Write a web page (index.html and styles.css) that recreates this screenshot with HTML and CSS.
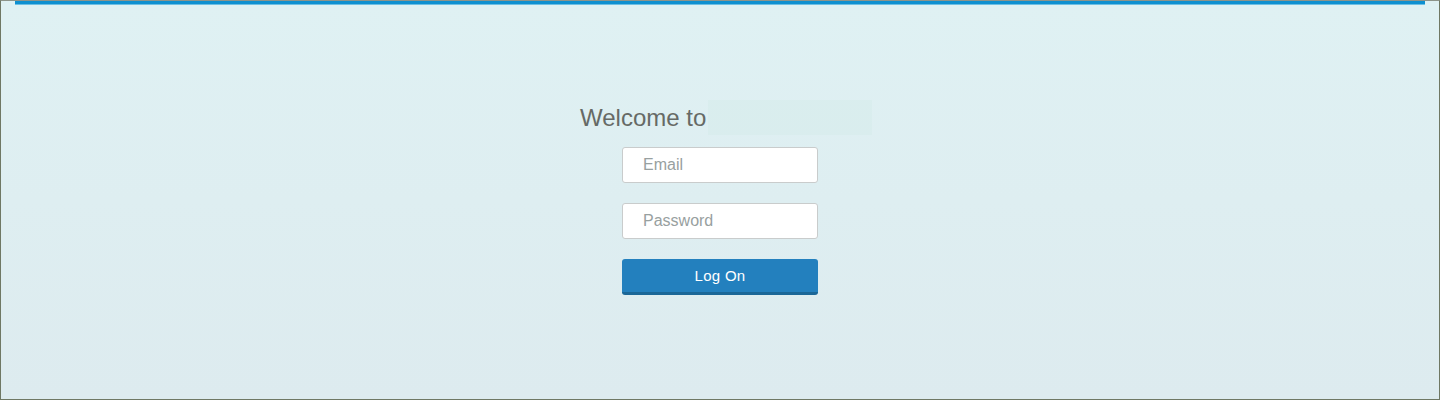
FILE: index.html
```
<!DOCTYPE html>
<html lang="en">
<head>
<meta charset="utf-8">
<title>Log On</title>
<link rel="stylesheet" href="styles.css">
</head>
<body>
<div class="page">
  <div class="topbar"></div>
  <main class="login">
    <div class="welcome">
      <h1 class="welcome-text">Welcome to</h1>
      <div class="logo" aria-hidden="true"></div>
    </div>
    <form class="form">
      <input class="field" type="text" placeholder="Email">
      <input class="field" type="password" placeholder="Password">
      <button class="btn" type="button">Log On</button>
    </form>
  </main>
</div>
</body>
</html>
```
FILE: styles.css
```
html, body {
  margin: 0;
  padding: 0;
}
body {
  font-family: "Liberation Sans", Arial, sans-serif;
}
.page {
  box-sizing: border-box;
  width: 1440px;
  height: 400px;
  border: 1px solid #6f7864;
  border-top-color: #8d948a;
  background: linear-gradient(#dff1f3, #ddebef);
  overflow: hidden;
}
.topbar {
  margin: 0 14px;
  height: 3px;
  background: #0e90d0;
  border-bottom: 1px solid #6cbfe4;
}
.login {
  width: 196px;
  margin: 0 auto;
  padding-top: 95px;
}
.welcome {
  display: flex;
  align-items: stretch;
  margin-left: -42px;
  width: 292px;
  height: 35px;
}
.welcome-text {
  margin: 0;
  font-weight: normal;
  font-size: 24px;
  line-height: 35px;
  color: #666a66;
  white-space: nowrap;
  padding-right: 2px;
}
.logo {
  flex: 1;
  background: rgba(205, 232, 228, 0.25);
}
.form {
  display: flex;
  flex-direction: column;
  gap: 20px;
  margin-top: 12px;
}
.field {
  box-sizing: border-box;
  width: 196px;
  height: 36px;
  margin: 0;
  padding: 0 0 0 20px;
  border: 1px solid #c9cccc;
  border-radius: 3px;
  background: #fff;
  font-family: "Liberation Sans", Arial, sans-serif;
  font-size: 16px;
  color: #333;
  outline: none;
}
.field::placeholder {
  color: #98a0a0;
}
.btn {
  box-sizing: border-box;
  width: 196px;
  height: 36px;
  margin: 0;
  padding: 0;
  border: 0;
  border-bottom: 3px solid #1b6797;
  border-radius: 3px;
  background: #2380be;
  color: #fff;
  font-family: "Liberation Sans", Arial, sans-serif;
  font-size: 15px;
  line-height: 33px;
  letter-spacing: 0.3px;
  cursor: pointer;
}
```
